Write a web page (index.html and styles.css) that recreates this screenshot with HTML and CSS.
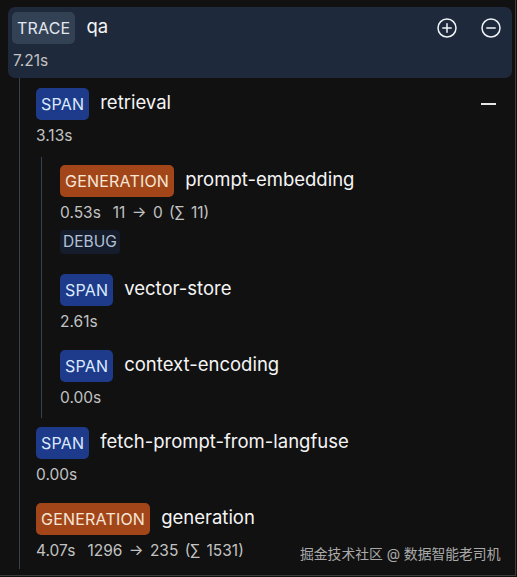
FILE: index.html
```html
<!DOCTYPE html>
<html lang="en">
<head>
<meta charset="utf-8">
<link rel="stylesheet" href="styles.css">
</head>
<body>
<div class="frame">
  <div class="trace-card">
    <div class="head">
      <span class="badge b-trace">TRACE</span>
      <span class="name">qa</span>
      <div class="actions">
        <svg class="icon" viewBox="0 0 20 20" width="20" height="20"><circle cx="10" cy="10" r="9" fill="none" stroke="#f1f5f9" stroke-width="1.5"/><path d="M10 5.8v8.4M5.8 10h8.4" stroke="#f1f5f9" stroke-width="1.5" stroke-linecap="round"/></svg>
        <svg class="icon" viewBox="0 0 20 20" width="20" height="20"><circle cx="10" cy="10" r="9" fill="none" stroke="#f1f5f9" stroke-width="1.5"/><path d="M5.8 10h8.4" stroke="#f1f5f9" stroke-width="1.5" stroke-linecap="round"/></svg>
      </div>
    </div>
    <div class="meta trace-meta">7.21s</div>
  </div>

  <div class="level level1">
    <div class="node node-parent">
      <div class="head">
        <span class="badge b-span">SPAN</span>
        <span class="name">retrieval</span>
        <span class="collapse"></span>
      </div>
      <div class="meta">3.13s</div>
      <div class="level level2">
        <div class="node">
          <div class="head">
            <span class="badge b-gen">GENERATION</span>
            <span class="name">prompt-embedding</span>
          </div>
          <div class="meta">0.53s<span class="tokens">11 → 0 (∑ 11)</span></div>
          <div class="debug">DEBUG</div>
        </div>
        <div class="node">
          <div class="head">
            <span class="badge b-span">SPAN</span>
            <span class="name">vector-store</span>
          </div>
          <div class="meta">2.61s</div>
        </div>
        <div class="node last">
          <div class="head">
            <span class="badge b-span">SPAN</span>
            <span class="name">context-encoding</span>
          </div>
          <div class="meta">0.00s</div>
        </div>
      </div>
    </div>
    <div class="node">
      <div class="head">
        <span class="badge b-span">SPAN</span>
        <span class="name">fetch-prompt-from-langfuse</span>
      </div>
      <div class="meta">0.00s</div>
    </div>
    <div class="node last">
      <div class="head">
        <span class="badge b-gen">GENERATION</span>
        <span class="name">generation</span>
      </div>
      <div class="meta">4.07s<span class="tokens">1296 → 235 (∑ 1531)</span></div>
    </div>
  </div>
  <div class="watermark">掘金技术社区 @ 数据智能老司机</div>
</div>
</body>
</html>
```

FILE: styles.css
```css
html, body {
  margin: 0;
  padding: 0;
  background: #111111;
}
body {
  font-family: Inter, "Noto Sans", "Noto Sans CJK SC", sans-serif;
  color: #f1f1f1;
}
.frame {
  position: relative;
  box-sizing: border-box;
  width: 516px;
  height: 576px;
  padding: 7px 3px 0 8px;
  border-right: 1px solid #3d3d3d;
  border-bottom: 1px solid #3d3d3d;
  overflow: hidden;
}
.trace-card {
  background: #1e293b;
  border-radius: 7px;
  padding: 5px 11px 7px 4px;
}
.head {
  display: flex;
  align-items: center;
  height: 32px;
}
.badge {
  display: inline-flex;
  align-items: center;
  height: 32px;
  padding: 0 5px;
  border-radius: 5px;
  font-size: 16px;
  letter-spacing: 0.2px;
}
.b-trace {
  background: #334155;
  color: #e2e8f0;
  padding: 0 5px;
}
.b-span {
  background: #1e3a8a;
  color: #dbeafe;
}
.b-gen {
  background: #a2461a;
  color: #f7e6d6;
}
.name {
  margin-left: 11px;
  font-size: 18.5px;
  color: #f5f5f5;
  position: relative;
  top: -2px;
}
.actions {
  margin-left: auto;
  display: flex;
  gap: 24px;
  align-items: center;
}
.icon {
  display: block;
}
.meta {
  margin-top: 6px;
  height: 20px;
  line-height: 20px;
  font-size: 15.5px;
  color: #c2c2c2;
  word-spacing: 2px;
}
.trace-meta {
  margin-top: 7px;
  margin-left: 1px;
}
.tokens {
  margin-left: 12px;
}
.level {
  border-left: 1px solid #334155;
}
.level1 {
  margin-left: 11px;
  padding: 10px 0 8px 16px;
}
.level2 {
  margin-left: 5px;
  margin-top: 11px;
  padding: 8px 0 10px 18px;
}
.node {
  margin-bottom: 18px;
}
.node.last {
  margin-bottom: 0;
}
.node-parent {
  margin-bottom: 9px;
}
.collapse {
  margin-left: auto;
  margin-right: 16px;
  width: 15px;
  height: 2px;
  background: #e5e5e5;
}
.debug {
  display: inline-block;
  margin-top: 7px;
  height: 24px;
  line-height: 24px;
  padding: 0 3px;
  border-radius: 4px;
  background: #151c2c;
  color: #b4c1d6;
  font-size: 15.5px;
  margin-bottom: 2px;
}
.watermark {
  position: absolute;
  left: 300px;
  top: 543px;
  font-size: 13.8px;
  color: #c4c4c4;
  opacity: 0.85;
  white-space: nowrap;
}
```
